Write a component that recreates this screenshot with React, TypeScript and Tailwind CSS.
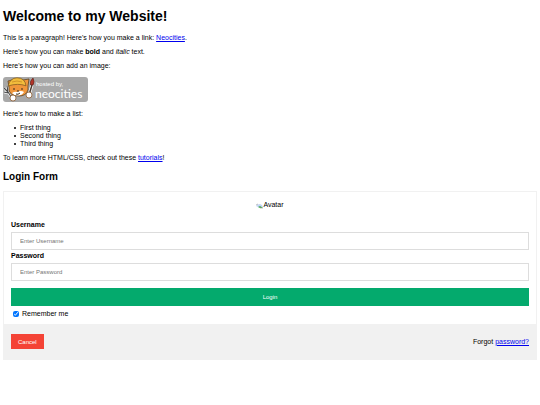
const linkClass = "text-[#0000ee] underline";
const fieldClass =
  "block w-full h-[18px] mt-[3px] border border-[#dddddd] bg-white px-2 text-[6px] text-black placeholder:text-[#757575]";

const things = ["First thing", "Second thing", "Third thing"];

const NeocitiesBadge = () => (
  <svg viewBox="0 0 85 25" className="block h-[25px] w-[85px]" role="img" aria-label="Hosted by Neocities">
    <rect width="85" height="25" rx="3" fill="#a8a8a8" />
    {/* fork */}
    <path d="M1 11l4 4M4 9l1 6M1 15l4 1M5 15l4 6" stroke="#fff" strokeWidth="2.4" fill="none" />
    <path d="M1 11l4 4M4 9l1 6M1 15l4 1M5 15l4 6" stroke="#4a4a4a" strokeWidth="1.2" fill="none" />
    {/* cat */}
    <path d="M6 10L5 4l4-1q6-3 11 0l6-1-1 7 0 4q-2 6-9 6-9 0-10-6z" fill="#f0963a" stroke="#5b4426" strokeWidth=".8" />
    <path d="M5 9Q7 1 14 .8q8 0 9 8-8-3-18 .2z" fill="#f2bd3c" stroke="#7a5520" strokeWidth=".7" />
    <path d="M9 5q5-2 10 0" stroke="#c98a24" strokeWidth=".8" fill="none" />
    <path d="M9 16q3-2 5-1 4-2 7 0-2 3.500-6 3.500-4 0-6-2.500z" fill="#fff" />
    <path d="M11 11v2M19 11v2M14 14h2M13 17q2 1 4-1" stroke="#3b2b1c" strokeWidth="1" fill="none" />
    {/* brush */}
    <path d="M29 8l-3 10" stroke="#fff" strokeWidth="3" />
    <path d="M29 8l-3 10" stroke="#4a3a30" strokeWidth="1.5" />
    <path d="M27.500 8q-1-4 2.500-7 2 4 0 7z" fill="#b5352a" stroke="#542018" strokeWidth=".6" />
    <circle cx="10" cy="21" r="3" fill="#fff" stroke="#8a5a30" strokeWidth=".8" />
    <circle cx="26" cy="18" r="3" fill="#fff" stroke="#8a5a30" strokeWidth=".8" />
    <text x="33" y="9" fill="#fff" fontSize="6" fontFamily="Liberation Sans, sans-serif">
      hosted by,
    </text>
    <text x="32" y="21" fill="#fff" fontSize="12" fontFamily="Lato, sans-serif">
      neocities
    </text>
  </svg>
);

const Avatar = () => (
  <div className="flex items-center justify-center leading-[8px]">
    <svg viewBox="0 0 7 7" className="h-[7px] w-[7px]" aria-hidden="true">
      <path d="M0 4Q1 2 4 2l2 1 1 2-3 1z" fill="#c3d6f5" />
      <path d="M2 5l2-1 3 2H4z" fill="#4aa84a" />
      <path d="M0 3l2-1M4 6h3" stroke="#999" strokeWidth=".6" />
    </svg>
    <span>Avatar</span>
  </div>
);

const LoginForm = () => (
  <form className="mt-2 border border-[#f1f1f1]" onSubmit={(e) => e.preventDefault()}>
    <div className="pt-[9px]">
      <Avatar />
    </div>

    <div className="px-[7px] pt-3 pb-[6px]">
      <label htmlFor="uname" className="block font-bold">
        Username
      </label>
      <input id="uname" type="text" placeholder="Enter Username" className={fieldClass} />

      <label htmlFor="psw" className="mt-[2px] block font-bold">
        Password
      </label>
      <input id="psw" type="password" placeholder="Enter Password" className={fieldClass} />

      <button type="submit" className="mt-[7px] block h-[18px] w-full bg-[#04aa6d] text-[6px] text-white">
        Login
      </button>

      <label className="mt-1 ml-[2px] flex items-center gap-[3px]">
        <input type="checkbox" defaultChecked className="h-[6px] w-[6px]" />
        Remember me
      </label>
    </div>

    <div className="flex items-center justify-between bg-[#f1f1f1] px-[7px] py-[10px]">
      <button type="button" className="h-[15px] bg-[#f44336] px-[7px] text-[6px] text-white">
        Cancel
      </button>
      <span>
        Forgot{" "}
        <a href="#password" className={linkClass}>
          password?
        </a>
      </span>
    </div>
  </form>
);

const App = () => {
  return (
    <main className="px-[3px] pt-2 font-['Liberation_Sans',Arial,sans-serif] text-[7px] leading-[8px] text-black">
      <h1 className="text-[14px] leading-4 font-bold">Welcome to my Website!</h1>

      <p className="mt-[10px]">
        This is a paragraph! Here's how you make a link:{" "}
        <a href="https://neocities.org" className={linkClass}>
          Neocities
        </a>
        .
      </p>
      <p className="mt-[6px]">
        Here's how you can make <strong>bold</strong> and <em>italic</em> text.
      </p>
      <p className="mt-[6px]">Here's how you can add an image:</p>
      <div className="mt-[7px]">
        <NeocitiesBadge />
      </div>

      <p className="mt-2">Here's how to make a list:</p>
      <ul className="mt-[6px] pl-[11px]">
        {things.map((thing) => (
          <li
            key={thing}
            className="flex items-center gap-1 before:h-[2px] before:w-[2px] before:rounded-full before:bg-black"
          >
            {thing}
          </li>
        ))}
      </ul>

      <p className="mt-[6px]">
        To learn more HTML/CSS, check out these{" "}
        <a href="https://neocities.org/tutorials" className={linkClass}>
          tutorials
        </a>
        !
      </p>

      <h2 className="mt-[9px] text-[10px] leading-3 font-bold">Login Form</h2>
      <LoginForm />
    </main>
  );
};

export default App;
